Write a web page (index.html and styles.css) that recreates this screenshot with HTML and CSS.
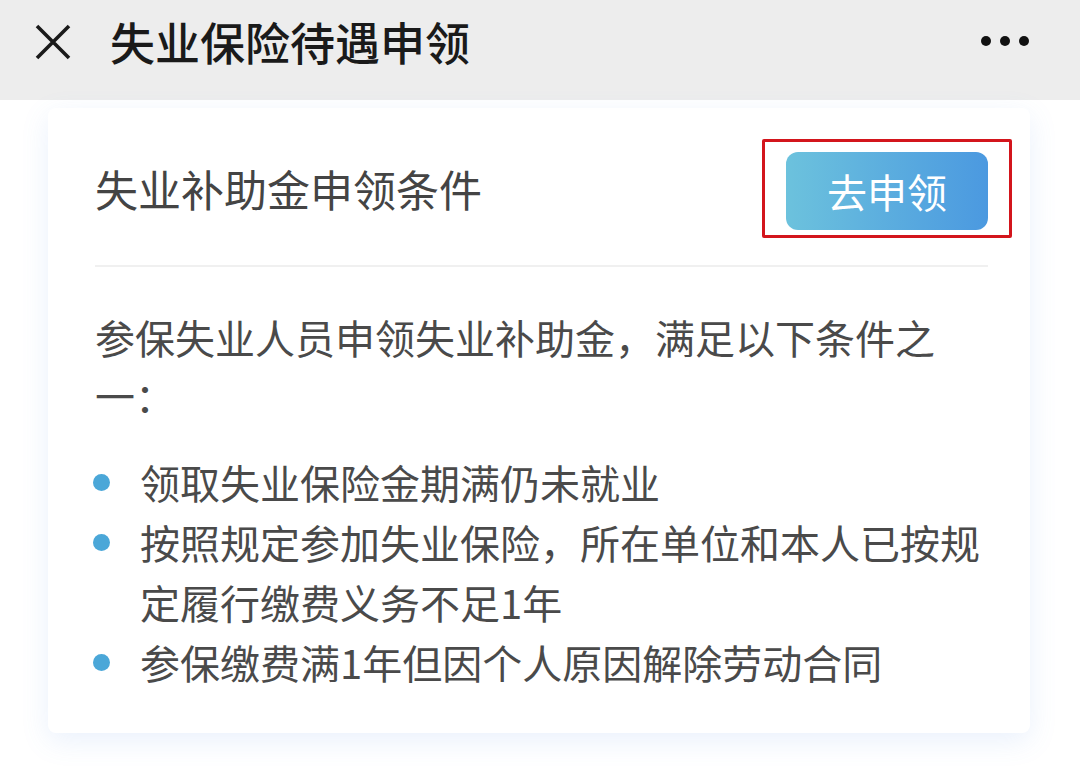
FILE: index.html
```html
<!DOCTYPE html>
<html lang="zh-CN">
<head>
    <meta charset="UTF-8">
    <meta name="viewport" content="width=device-width, initial-scale=1.0">
    <title>失业保险待遇申领</title>
    <link rel="stylesheet" href="styles.css">
</head>
<body>
    <div class="topbar">
        <div class="close-btn">
            <svg width="36" height="36" viewBox="0 0 36 36">
                <path d="M2 2 L34 34 M34 2 L2 34" stroke="#1a1a1a" stroke-width="3.6" fill="none"/>
            </svg>
        </div>
        <h1 class="topbar-title">失业保险待遇申领</h1>
        <div class="more-btn">
            <span></span><span></span><span></span>
        </div>
    </div>

    <div class="page">
        <div class="card">
            <div class="card-header">
                <h2 class="card-title">失业补助金申领条件</h2>
                <div class="apply-wrap">
                    <button class="apply-button">去申领</button>
                    <div class="highlight-box"></div>
                </div>
            </div>
            <div class="card-body">
                <p class="intro">参保失业人员申领失业补助金，满足以下条件之一：</p>
                <ul class="cond-list">
                    <li>领取失业保险金期满仍未就业</li>
                    <li>按照规定参加失业保险，所在单位和本人已按规定履行缴费义务不足1年</li>
                    <li>参保缴费满1年但因个人原因解除劳动合同</li>
                </ul>
            </div>
        </div>
    </div>
</body>
</html>
```

FILE: styles.css
```css
body {
    font-family: "Noto Sans CJK SC", "Noto Sans", sans-serif;
    margin: 0;
    background-color: #fff;
    width: 1080px;
    height: 767px;
    overflow: hidden;
}
.topbar {
    height: 100px;
    background-color: #ededed;
    display: flex;
    align-items: center;
    padding: 0 36px 0 35px;
    box-sizing: border-box;
}
.close-btn {
    width: 36px;
    height: 36px;
    display: flex;
    margin-top: -16px;
}
.topbar-title {
    margin: -17px 0 0 39px;
    font-size: 45px;
    font-weight: 500;
    color: #1a1a1a;
    line-height: 1;
    flex: 1;
}
.more-btn {
    display: flex;
    gap: 9px;
    margin-top: -18px;
    margin-right: 15px;
}
.more-btn span {
    width: 10px;
    height: 10px;
    border-radius: 50%;
    background: #111;
}
.page {
    padding: 8px 50px 0 48px;
}
.card {
    background: #fff;
    border-radius: 8px;
    box-shadow: 0 8px 28px rgba(90, 150, 230, 0.13);
    padding: 44px 42px 41px 47px;
}
.card-header {
    display: flex;
    align-items: center;
    justify-content: space-between;
    padding-bottom: 35px;
    border-bottom: 2px solid #f0f0f0;
}
.card-title {
    margin: -5px 0 0;
    font-size: 43px;
    font-weight: 400;
    color: #444;
    line-height: 1;
}
.apply-wrap {
    position: relative;
}
.apply-button {
    display: block;
    width: 202px;
    height: 78px;
    border: none;
    border-radius: 12px;
    background: linear-gradient(90deg, #6cc2dd, #4b99e0);
    color: #fff;
    font-family: inherit;
    font-size: 40px;
    padding: 0;
}
.highlight-box {
    position: absolute;
    top: -13px;
    left: -24px;
    right: -24px;
    bottom: -8px;
    border: 3px solid #d3151c;
    border-radius: 2px;
}
.card-body {
    padding-top: 41px;
}
.intro {
    margin: 0 0 28px;
    font-size: 40px;
    line-height: 58px;
    color: #4a4a4a;
}
.cond-list {
    list-style: none;
    margin: 0;
    padding: 0;
}
.cond-list li {
    display: flex;
    font-size: 40px;
    line-height: 60px;
    color: #4a4a4a;
}
.cond-list li::before {
    content: "";
    flex: none;
    width: 17px;
    height: 17px;
    border-radius: 50%;
    background: #4ba7d8;
    margin: 22px 30px 0 -2px;
}
```
